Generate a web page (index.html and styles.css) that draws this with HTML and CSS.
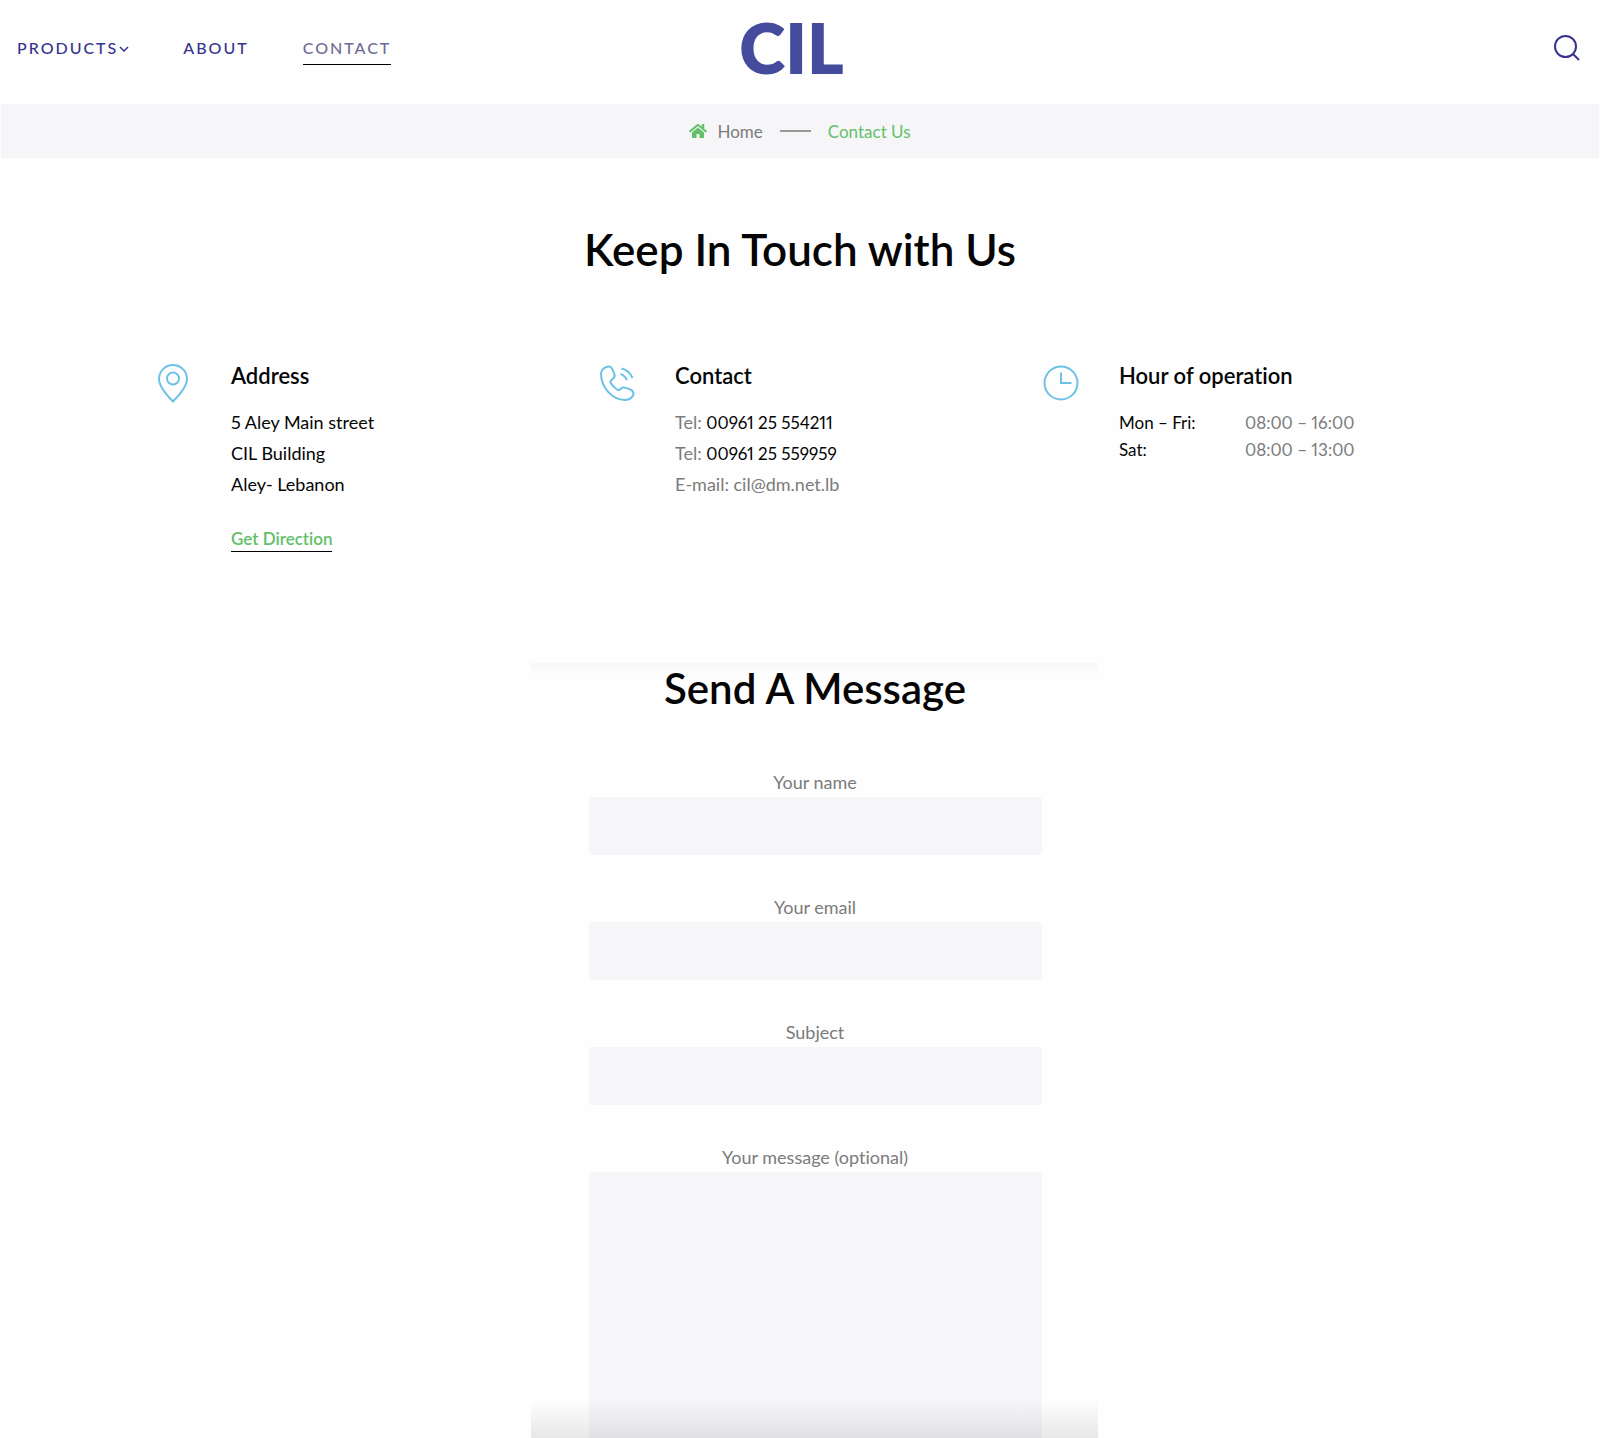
FILE: index.html
```html
<!DOCTYPE html>
<html lang="en">
<head>
<meta charset="utf-8">
<meta name="viewport" content="width=device-width, initial-scale=1">
<title>Contact Us – CIL</title>
<link rel="stylesheet" href="styles.css">
</head>
<body>
<header class="site-header">
  <nav class="main-nav" aria-label="Main">
    <a class="nav-link" href="#products">PRODUCTS<svg class="chevron" viewBox="0 0 10 6" aria-hidden="true"><path d="M1 1l4 4 4-4"/></svg></a>
    <a class="nav-link" href="#about">ABOUT</a>
    <a class="nav-link nav-link-active" href="#contact" aria-current="page">CONTACT</a>
  </nav>
  <a class="logo" href="#home">CIL</a>
  <button class="search-button" type="button" aria-label="Search">
    <svg viewBox="0 0 26 26" aria-hidden="true"><circle cx="11.5" cy="11.5" r="10.5"/><path d="M18.5 18.5l6.500 6.500"/></svg>
  </button>
</header>

<nav class="breadcrumb" aria-label="Breadcrumb">
  <a class="crumb-home" href="#home">
    <svg class="home-icon" viewBox="0 0 576 512" aria-hidden="true"><path d="M280.37 148.26L96 300.11V464a16 16 0 0 0 16 16l112.06-.29a16 16 0 0 0 15.92-16V368a16 16 0 0 1 16-16h64a16 16 0 0 1 16 16v95.64a16 16 0 0 0 16 16.05L464 480a16 16 0 0 0 16-16V300L295.67 148.26a12.19 12.19 0 0 0-15.3 0zM571.6 251.47L488 182.56V44.05a12 12 0 0 0-12-12h-56a12 12 0 0 0-12 12v72.61L318.47 43a48 48 0 0 0-61 0L4.34 251.47a12 12 0 0 0-1.6 16.9l25.5 31A12 12 0 0 0 45.15 301l235.22-193.74a12.19 12.19 0 0 1 15.3 0L530.9 301a12 12 0 0 0 16.9-1.6l25.5-31a12 12 0 0 0-1.7-16.93z"/></svg>
    Home
  </a>
  <span class="crumb-line"></span>
  <span class="crumb-current">Contact Us</span>
</nav>

<main>
  <h1 class="page-title">Keep In Touch with Us</h1>

  <div class="info">
    <section class="info-item">
      <svg class="info-icon" viewBox="0 0 40 40" aria-hidden="true"><path d="M18 37.500C9.500 29 4 22 4 15a14 14 0 0 1 28 0c0 7-5.500 14-14 22.500z"/><circle cx="18" cy="14.500" r="6"/></svg>
      <div>
        <h2 class="info-title">Address</h2>
        <p class="info-text info-dark">5 Aley Main street<br>CIL Building<br>Aley- Lebanon</p>
        <a class="direction" href="#map">Get Direction</a>
      </div>
    </section>
    <section class="info-item">
      <svg class="info-icon" viewBox="0 0 40 40" aria-hidden="true"><path d="M10.500 2.500C6 2.500 2 5.500 2 9.500c0 14 11 26 24 26.500 4 .2 8-2.500 8.500-6 .2-3-1.500-4-4.500-5-4-1.500-6-2.500-8-.5-1.500 1.700-2.500 2-4 1-2.500-1.700-4.500-3.500-6-6-1-1.700-.5-3 1-4 2-1.500 3.500-2.500 2.500-5C14 6.500 13 2.500 10.500 2.500z"/><path d="M22.500 4.500c5 1 9 5 11 9.500M21.500 10c3 1 5 3 6.500 6"/></svg>
      <div>
        <h2 class="info-title">Contact</h2>
        <p class="info-text">Tel: <a class="info-dark number" href="tel:0096125554211">00961 25 554211</a><br>Tel: <a class="info-dark number" href="tel:0096125559959">00961 25 559959</a><br>E-mail: <a href="mailto:cil@dm.net.lb">cil@dm.net.lb</a></p>
      </div>
    </section>
    <section class="info-item">
      <svg class="info-icon" viewBox="0 0 40 40" aria-hidden="true"><circle cx="18" cy="19" r="16.500"/><path d="M18 8.500v10.500h10.500"/></svg>
      <div>
        <h2 class="info-title">Hour of operation</h2>
        <table class="hours">
          <tr><th scope="row">Mon – Fri:</th><td>08:00 – 16:00</td></tr>
          <tr><th scope="row">Sat:</th><td>08:00 – 13:00</td></tr>
        </table>
      </div>
    </section>
  </div>

  <form class="message-form">
    <h2 class="form-title">Send A Message</h2>
    <div class="field"><label for="name">Your name</label><input id="name" type="text"></div>
    <div class="field"><label for="email">Your email</label><input id="email" type="email"></div>
    <div class="field"><label for="subject">Subject</label><input id="subject" type="text"></div>
    <div class="field"><label for="message">Your message (optional)</label><textarea id="message"></textarea></div>
  </form>
</main>
</body>
</html>
```
FILE: styles.css
```css
* { box-sizing: border-box; }

body {
  margin: 0;
  background: #fefefe;
  color: #7b7b7b;
  font-family: Lato, "Liberation Sans", sans-serif;
  font-size: 18px;
  font-variant-ligatures: none;
  font-variant-numeric: proportional-nums;
  line-height: 31px;
}

a { color: inherit; text-decoration: none; }
h1, h2, p { margin: 0; }
svg { fill: none; stroke: currentColor; stroke-width: 2; }

.site-header {
  display: grid;
  grid-template-columns: 1fr auto 1fr;
  align-items: center;
  height: 104px;
  padding: 0 20px 8px 17px;
}
.main-nav {
  display: flex;
  gap: 54px;
  font-size: 16px;
  font-weight: 500;
  line-height: 32px;
  letter-spacing: 2px;
  color: #36348e;
}
.nav-link { border-bottom: 1px solid transparent; }
.nav-link-active { border-color: #000; color: #6f6c92; }
.chevron { width: 10px; height: 6px; margin-left: 1px; stroke-width: 1.5; vertical-align: 2px; }
.logo {
  margin: 0 14px 3px 0;
  font-size: 70px;
  font-weight: 800;
  line-height: 72px;
  color: #444b9d;
}
.search-button {
  justify-self: end;
  width: 26px;
  height: 26px;
  padding: 0;
  border: 0;
  background: none;
  color: #36348e;
}
.search-button svg { display: block; }

.breadcrumb {
  display: flex;
  align-items: center;
  justify-content: center;
  gap: 17px;
  height: 54px;
  margin: 0 1px;
  background: #f6f6f8;
  font-size: 17px;
}
.crumb-home { display: flex; align-items: center; gap: 10px; }
.home-icon { width: 18px; height: 16px; fill: #64bf6a; stroke: none; }
.crumb-line { width: 31px; height: 2px; background: #999; }
.crumb-current { color: #64bf6a; }

.page-title {
  margin-top: 59px;
  text-align: center;
  font-size: 44px;
  font-weight: 600;
  line-height: 64px;
  color: #050505;
}

.info {
  display: grid;
  grid-template-columns: repeat(3, 1fr);
  width: 86%;
  max-width: 1374px;
  min-height: 302px;
  margin: 80px auto 0;
  padding-left: 42px;
}
.info-item { display: flex; align-items: flex-start; gap: 36px; }
.info-icon { flex: none; width: 40px; height: 40px; margin-top: 3px; color: #6cc2e4; }
.info-title {
  margin-bottom: 16px;
  font-size: 22px;
  font-weight: 600;
  line-height: 30px;
  color: #050505;
}
.info-dark { color: #050505; }
.number { font-size: 17px; }
.direction {
  display: inline-block;
  margin-top: 26px;
  border-bottom: 1px solid #000;
  font-size: 17px;
  font-weight: 600;
  line-height: 25px;
  color: #64bf6a;
}
.hours { margin-top: 18px; border-collapse: collapse; font-size: 17px; line-height: 27px; }
.hours th { width: 126px; padding: 0; text-align: left; font-weight: 400; color: #050505; }
.hours td { padding: 0; }

.message-form {
  position: relative;
  left: 14px;
  width: 100%;
  max-width: 567px;
  margin: 0 auto;
  padding: 0 56px 0 58px;
  text-align: center;
}
.message-form::before,
.message-form::after {
  content: "";
  position: absolute;
  left: 0;
  right: 0;
  pointer-events: none;
}
.message-form::before { top: 0; height: 12px; background: linear-gradient(#f8f7f8, #fefefe); z-index: -1; }
.message-form::after { bottom: 0; height: 38px; background: linear-gradient(rgba(70, 70, 80, 0), rgba(70, 70, 80, .12)); }
.form-title {
  margin-bottom: 53px;
  font-size: 42px;
  font-weight: 600;
  line-height: 50px;
  color: #050505;
}
.field { margin-bottom: 36px; }
.field:last-child { margin-bottom: 0; }
.field label { display: block; padding-top: 1px; line-height: 30px; }
.field input,
.field textarea {
  display: block;
  width: 100%;
  height: 58px;
  padding: 12px 16px;
  border: 0;
  border-radius: 4px;
  background: #f6f6f9;
  font: inherit;
}
.field textarea { height: 266px; border-radius: 4px 4px 0 0; resize: none; }
```
